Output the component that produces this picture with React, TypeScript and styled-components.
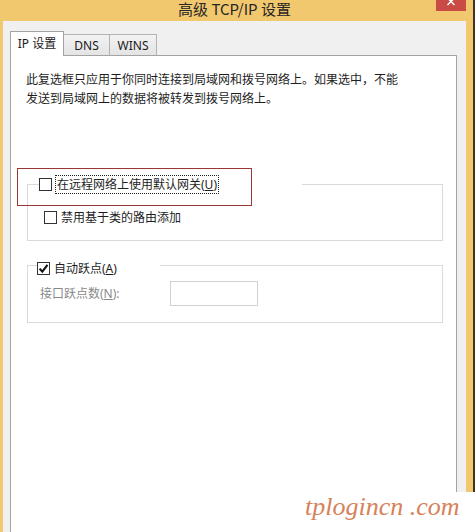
import React from "react";
import styled, { createGlobalStyle } from "styled-components";

const GlobalStyle = createGlobalStyle`
  html, body {
    margin: 0;
    padding: 0;
    background: #ffffff;
  }
  body {
    width: 475px;
    height: 532px;
    overflow: hidden;
    font-family: "Noto Sans", "Noto Sans CJK SC", sans-serif;
  }
`;

const Screen = styled.div`
  position: relative;
  width: 475px;
  height: 532px;
  overflow: hidden;
`;

const Window = styled.div`
  box-sizing: border-box;
  width: 475px;
  height: 532px;
  display: flex;
  flex-direction: column;
  background: #f1c86e;
  border-right: 2px solid #3f3322;
`;

const TitleBar = styled.div`
  position: relative;
  flex: none;
  box-sizing: border-box;
  height: 21px;
  display: flex;
  justify-content: center;
  padding: 1px 4px 0 0;
  font-family: "Noto Sans CJK SC", sans-serif;
  font-size: 15px;
  line-height: 16px;
  color: #262626;
`;

const CloseButton = styled.div`
  position: absolute;
  top: 0;
  right: 7px;
  width: 30px;
  height: 11px;
  background: #c84c45;
  display: flex;
  justify-content: center;
  align-items: flex-start;
`;

const Body = styled.div`
  flex: 1;
  display: flex;
  flex-direction: column;
  margin: 0 7px 0 3px;
  padding: 10px 9px 0 7px;
  background: #f0f0f0;
  min-height: 0;
`;

const TabRow = styled.div`
  display: flex;
  align-items: flex-end;
  height: 25px;
  margin-bottom: -1px;
`;

const Tab = styled.div<{ $active?: boolean; $width: number }>`
  box-sizing: border-box;
  position: relative;
  z-index: ${(p) => (p.$active ? 2 : 1)};
  width: ${(p) => p.$width}px;
  height: ${(p) => (p.$active ? 25 : 22)}px;
  margin-left: ${(p) => (p.$active ? 0 : -1)}px;
  display: flex;
  align-items: center;
  justify-content: center;
  padding-top: ${(p) => (p.$active ? 0 : 1)}px;
  border: 1px solid ${(p) => (p.$active ? "#a3a3a3" : "#b3b3b3")};
  border-bottom: ${(p) => (p.$active ? "none" : "1px solid #a3a3a3")};
  background: ${(p) =>
    p.$active ? "#ffffff" : "linear-gradient(#f2f2f2, #e4e4e4)"};
  font-size: 12px;
  line-height: 16px;
  color: #1a1a1a;
`;

const Panel = styled.div`
  position: relative;
  flex: 1;
  display: flex;
  flex-direction: column;
  background: #ffffff;
  border: 1px solid #a3a3a3;
  border-bottom: none;
  padding: 14px 12px 0 15px;
`;

const Note = styled.p`
  margin: 0;
  font-size: 12px;
  line-height: 19px;
  color: #1e1e1e;
`;

const Group = styled.fieldset<{ $top: number }>`
  margin: ${(p) => p.$top}px 1px 0 1px;
  padding: 0;
  min-width: 0;
  border: 1px solid #dadada;
`;

const GroupLegend = styled.legend<{ $offset: number; $width: number; $drop?: number }>`
  box-sizing: border-box;
  display: flex;
  align-items: center;
  margin-left: ${(p) => p.$offset}px;
  width: ${(p) => p.$width}px;
  padding: ${(p) => p.$drop || 0}px 0 0 0;
  height: ${(p) => 19 + (p.$drop || 0)}px;
`;

const GroupBody = styled.div<{ $pad: string }>`
  padding: ${(p) => p.$pad};
`;

const Row = styled.div`
  display: flex;
  align-items: center;
  height: 19px;
`;

const Box = styled.span<{ $checked?: boolean }>`
  box-sizing: border-box;
  flex: none;
  width: 13px;
  height: 13px;
  border: 1px solid #333333;
  background: #ffffff;
  display: flex;
  align-items: center;
  justify-content: center;
`;

const Label = styled.span<{ $focus?: boolean; $muted?: boolean }>`
  margin-left: ${(p) => (p.$focus ? 3 : 4)}px;
  padding: ${(p) => (p.$focus ? "0 1px" : "0")};
  border: ${(p) => (p.$focus ? "1px dotted #222" : "none")};
  font-size: 12px;
  line-height: 17px;
  color: ${(p) => (p.$muted ? "#8a8a8a" : "#1e1e1e")};
  white-space: nowrap;
`;

const Key = styled.span`
  text-decoration: underline;
`;

const FieldRow = styled.div`
  display: flex;
  align-items: center;
  height: 25px;
`;

const FieldLabel = styled.span`
  width: 130px;
  font-size: 12px;
  line-height: 17px;
  color: #8a8a8a;
`;

const NumberInput = styled.div`
  box-sizing: border-box;
  width: 88px;
  height: 25px;
  border: 1px solid #d2d2d2;
  background: #ffffff;
`;

const Highlight = styled.div`
  position: absolute;
  left: 6px;
  top: 112px;
  width: 235px;
  height: 38px;
  box-sizing: border-box;
  border: 1.5px solid #993636;
  pointer-events: none;
`;

const Watermark = styled.div`
  position: absolute;
  right: 0;
  bottom: 0;
  width: 178px;
  height: 40px;
  box-sizing: border-box;
  padding-left: 8px;
  background: #ffffff;
  font-family: "Liberation Serif", serif;
  font-style: italic;
  font-size: 26px;
  line-height: 30px;
  color: #d6825a;
  white-space: nowrap;
`;

const Check = ({ checked }: { checked?: boolean }) => (
  <Box $checked={checked}>
    {checked && (
      <svg width="11" height="11" viewBox="0 0 11 11">
        <path d="M1.6 5.6 L4.3 8.6 L9.5 1.8" fill="none" stroke="#111" strokeWidth="2.1" />
      </svg>
    )}
  </Box>
);

export default function App() {
  return (
    <Screen>
      <GlobalStyle />
      <Window>
        <TitleBar>
          高级 TCP/IP 设置
          <CloseButton>
            <svg width="8" height="6" viewBox="0 0 8 6">
              <path d="M0.5 -2 L7.5 5 M7.5 -2 L0.5 5" stroke="#fff" strokeWidth="1.4" />
            </svg>
          </CloseButton>
        </TitleBar>
        <Body>
          <TabRow>
            <Tab $active $width={54}>IP 设置</Tab>
            <Tab $width={47}>DNS</Tab>
            <Tab $width={48}>WINS</Tab>
          </TabRow>
          <Panel>
            <Note>
              此复选框只应用于你同时连接到局域网和拨号网络上。如果选中，不能
              <br />
              发送到局域网上的数据将被转发到拨号网络上。
            </Note>

            <Group $top={67}>
              <GroupLegend $offset={11} $width={263}>
                <Check />
                <Label $focus>
                  在远程网络上使用默认网关(<Key>U</Key>)
                </Label>
              </GroupLegend>
              <GroupBody $pad="14px 0 13px 16px">
                <Row>
                  <Check />
                  <Label>禁用基于类的路由添加</Label>
                </Row>
              </GroupBody>
            </Group>

            <Group $top={12}>
              <GroupLegend $offset={9} $width={123} $drop={6}>
                <Check checked />
                <Label>
                  自动跃点(<Key>A</Key>)
                </Label>
              </GroupLegend>
              <GroupBody $pad="3px 0 16px 12px">
                <FieldRow>
                  <FieldLabel>
                    接口跃点数(<Key>N</Key>):
                  </FieldLabel>
                  <NumberInput />
                </FieldRow>
              </GroupBody>
            </Group>

            <Highlight />
          </Panel>
        </Body>
      </Window>
      <Watermark>tplogincn .com</Watermark>
    </Screen>
  );
}
